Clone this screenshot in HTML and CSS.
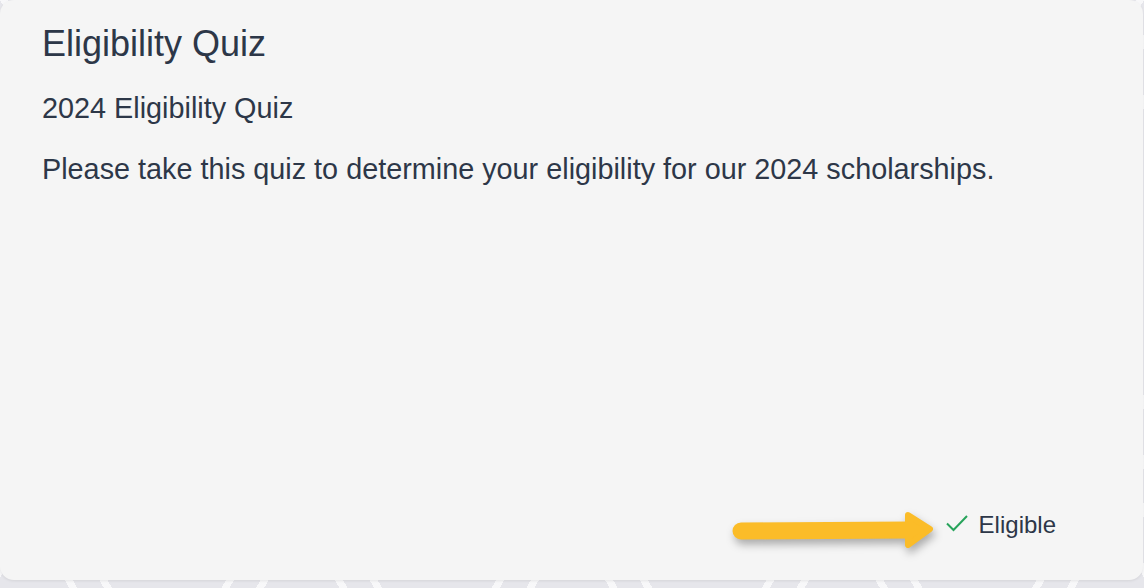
FILE: index.html
```html
<!DOCTYPE html>
<html lang="en">
<head>
    <meta charset="UTF-8">
    <title>Eligibility Quiz</title>
    <link rel="stylesheet" href="styles.css">
</head>
<body>
    <div class="card">
        <h1 class="title">Eligibility Quiz</h1>
        <h2 class="subtitle">2024 Eligibility Quiz</h2>
        <p class="desc">Please take this quiz to determine your eligibility for our 2024 scholarships.</p>
        <div class="footer">
            <span class="status">
                <svg class="check" width="22" height="18" viewBox="0 0 22 18">
                    <path d="M1 9.5 L7.5 16 L21 2" fill="none" stroke="#27a35b" stroke-width="2"/>
                </svg>
                Eligible
            </span>
        </div>
        <!-- annotation arrow -->
        <svg class="arrow" width="230" height="60" viewBox="720 500 230 60">
            <line x1="741" y1="531" x2="910" y2="530" stroke="#fbbc28" stroke-width="17" stroke-linecap="round"/>
            <polygon points="908,515 930,529 908,545" fill="#fbbc28" stroke="#fbbc28" stroke-width="6" stroke-linejoin="round"/>
        </svg>
    </div>
</body>
</html>
```

FILE: styles.css
```css
body {
    margin: 0;
    height: 588px;
    overflow: hidden;
    font-family: 'Liberation Sans', Arial, sans-serif;
    color: #2d3748;
    background-color: #e6e6eb;
    background-image:
        repeating-linear-gradient(60deg, transparent 0 60px, rgba(255, 255, 255, 0.7) 60px 67px, transparent 67px 90px, rgba(255, 255, 255, 0.7) 90px 97px, transparent 97px 234px),
        repeating-linear-gradient(-60deg, transparent 0 60px, rgba(255, 255, 255, 0.7) 60px 67px, transparent 67px 90px, rgba(255, 255, 255, 0.7) 90px 97px, transparent 97px 234px);
}

.card {
    position: relative;
    box-sizing: border-box;
    width: 1143px;
    height: 580px;
    padding: 22px 42px 40px;
    display: flex;
    flex-direction: column;
    background: #f5f5f5;
    border-radius: 14px;
    box-shadow: 0 1px 3px rgba(0, 0, 0, 0.08);
}

.title {
    margin: 0;
    font-size: 36px;
    font-weight: normal;
    line-height: 44px;
}

.subtitle {
    margin: 24px 0 0;
    font-size: 28.8px;
    font-weight: normal;
    line-height: 36px;
}

.desc {
    margin: 25px 0 0;
    font-size: 28.8px;
    line-height: 36px;
}

.footer {
    margin-top: auto;
    display: flex;
    justify-content: flex-end;
    padding-right: 45px;
}

.status {
    display: flex;
    align-items: center;
    gap: 11px;
    font-size: 24px;
    line-height: 30px;
}

.check {
    margin-top: -4px;
    margin-left: -2px;
}

.arrow {
    position: absolute;
    left: 720px;
    top: 500px;
    filter: drop-shadow(2px 5px 4px rgba(0, 0, 0, 0.3));
}
```
